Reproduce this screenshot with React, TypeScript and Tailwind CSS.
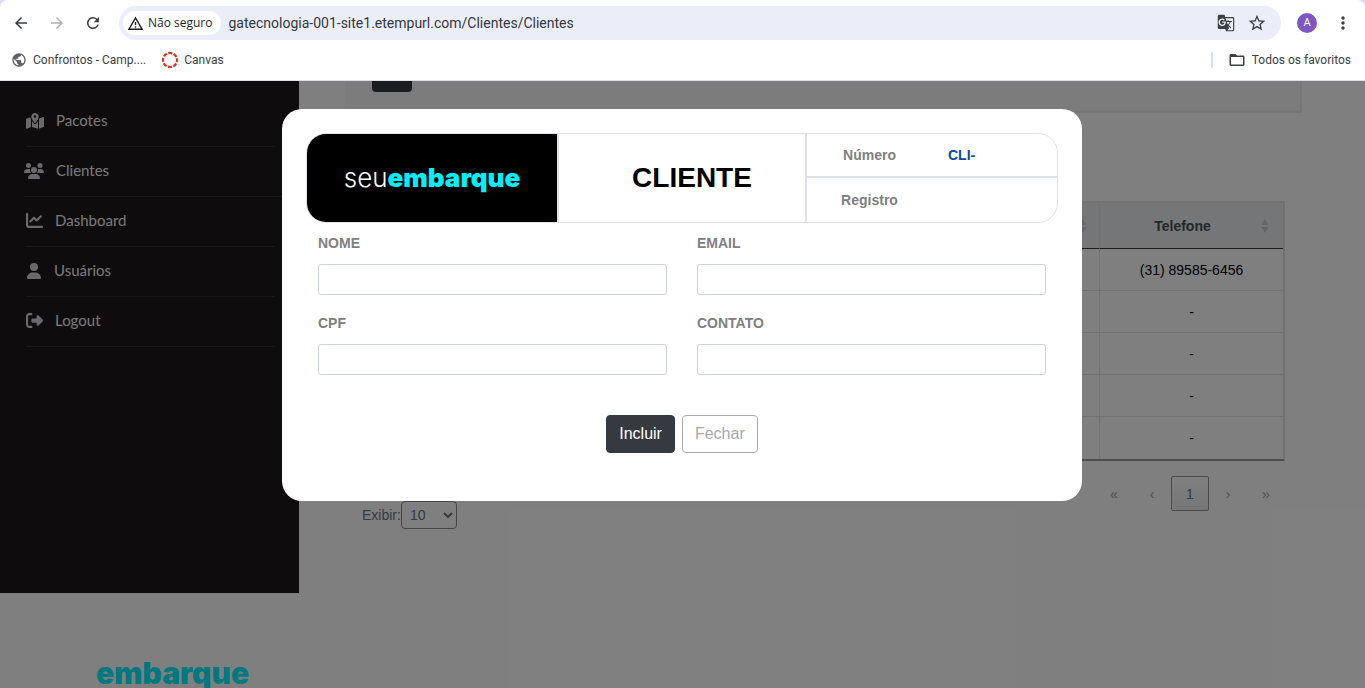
import React from "react";
import {
  MdArrowBack,
  MdArrowForward,
  MdFolderOpen,
  MdGTranslate,
  MdMoreVert,
  MdOutlineWarningAmber,
  MdPublic,
  MdRefresh,
  MdStarBorder,
} from "react-icons/md";
import {
  FaChartLine,
  FaMapLocationDot,
  FaRightFromBracket,
  FaUser,
  FaUsers,
} from "react-icons/fa6";

function CanvasMark() {
  return (
    <svg className="h-4 w-4" viewBox="0 0 16 16" fill="none">
      <circle cx="8" cy="8" r="7" stroke="#d3362b" strokeWidth="2.2" strokeDasharray="4.1 1.4" strokeDashoffset="2" />
    </svg>
  );
}

function BrowserBar() {
  return (
    <header className="shrink-0 bg-[#d3e3fd] font-['Roboto',sans-serif] text-[#3c4043]">
      <div className="rounded-t-lg border-b border-[#dde1e6] bg-white">
        <div className="flex h-[46px] items-center pl-3 pr-3">
          <button className="flex h-[18px] w-[18px] items-center justify-center text-[#3c4043]">
            <MdArrowBack size={18} />
          </button>
          <button className="ml-[18px] flex h-[18px] w-[18px] items-center justify-center text-[#aeb0b3]">
            <MdArrowForward size={18} />
          </button>
          <button className="ml-[18px] flex h-[18px] w-[18px] items-center justify-center text-[#3c4043]">
            <MdRefresh size={18} />
          </button>
          <div className="ml-[17px] flex h-[34px] flex-1 items-center rounded-full bg-[#ebeef8] pl-1 pr-[14px]">
            <button className="flex h-6 items-center gap-1 rounded-full bg-white pl-1 pr-2 font-['Open_Sans',sans-serif] text-xs text-[#1f1f1f]">
              <MdOutlineWarningAmber size={17} />
              Não seguro
            </button>
            <input
              type="text"
              defaultValue="gatecnologia-001-site1.etempurl.com/Clientes/Clientes"
              className="ml-2 min-w-0 flex-1 bg-transparent text-sm text-[#34373c] outline-none"
            />
            <button className="ml-3">
              <MdGTranslate size={18} />
            </button>
            <button className="ml-3">
              <MdStarBorder size={20} />
            </button>
          </div>
          <div className="ml-4 flex h-5 w-5 items-center justify-center rounded-full bg-[#7e57c2] text-[11px] text-white">
            A
          </div>
          <button className="ml-4">
            <MdMoreVert size={20} />
          </button>
        </div>
        <div className="flex h-[34px] items-center pb-[6px] pl-[11px] pr-[14px] text-xs">
          <a href="#" className="flex items-center gap-[6px]">
            <MdPublic size={16} className="text-[#5f6368]" />
            Confrontos - Camp....
          </a>
          <a href="#" className="ml-4 flex items-center gap-[6px]">
            <CanvasMark />
            Canvas
          </a>
          <div className="ml-auto h-4 w-[2px] bg-[#d3e3fd]" />
          <button className="ml-[15px] flex items-center gap-[6px]">
            <MdFolderOpen size={18} />
            Todos os favoritos
          </button>
        </div>
      </div>
    </header>
  );
}

const menu = [
  { label: "Pacotes", icon: <FaMapLocationDot size={18} />, wide: false },
  { label: "Clientes", icon: <FaUsers size={20} />, wide: true },
  { label: "Dashboard", icon: <FaChartLine size={17} />, wide: false },
  { label: "Usuários", icon: <FaUser size={16} />, wide: false },
  { label: "Logout", icon: <FaRightFromBracket size={17} />, wide: false },
];

function Sidebar() {
  return (
    <aside className="w-[299px] shrink-0">
      <nav className="flex h-[512px] flex-col bg-[#1e191b] pt-4 font-['Lato',sans-serif] text-[15px] text-[#f0f0f0]">
        {menu.map((item) => (
          <a
            key={item.label}
            href="#"
            className={`flex h-[50px] items-center gap-3 border-b border-[#363133] pb-[2px] ${item.wide ? "ml-6 mr-4" : "ml-[26px] mr-6"}`}
          >
            <span className="text-[#d6d3dc]">{item.icon}</span>
            {item.label}
          </a>
        ))}
      </nav>
      <div className="pl-24 pt-16 font-['Inter',sans-serif] text-3xl leading-8 font-black text-[#00f0ff]">
        embarque
      </div>
    </aside>
  );
}

function SortMark() {
  return (
    <svg className="h-4 w-[8px] shrink-0 text-[#c9ccd0]" viewBox="0 0 8 16" fill="currentColor">
      <path d="M4 1 7.5 7h-7zM4 15 .5 9h7z" />
    </svg>
  );
}

const phones = ["(31) 89585-6456", "-", "-", "-", "-"];

function ClientList() {
  return (
    <main className="min-w-0 flex-1 pl-[46px] pr-[63px]">
      <div className="h-8 border-b-2 border-r-2 border-[#eeeef3] bg-[#f8f8fb] pl-[27px]">
        <div className="h-[11px] w-10 rounded-b bg-[#343a40]" />
      </div>
      <div className="px-[17px] pt-[88px]">
        <table className="w-full table-fixed border-separate border-spacing-0 border-2 border-b-[#9a9da0] border-l-[#dee2e6] border-r-[#dee2e6] border-t-[#dee2e6] text-sm text-black">
          <thead>
            <tr className="h-[46px] bg-[#e9ecef] text-[#495057]">
              <th className="border-b border-r border-b-[#343a40] border-r-[#dee2e6] pr-3">
                <span className="flex justify-end">
                  <SortMark />
                </span>
              </th>
              <th className="w-[183px] border-b border-b-[#343a40] pr-[14px] pl-1">
                <span className="flex items-center">
                  <span className="flex-1 text-center">Telefone</span>
                  <SortMark />
                </span>
              </th>
            </tr>
          </thead>
          <tbody>
            {phones.map((phone, i) => (
              <tr key={i} className="h-[42px]">
                <td className={`border-r border-[#dee2e6] ${i < 4 ? "border-b" : ""}`} />
                <td className={`border-[#dee2e6] text-center ${i < 4 ? "border-b" : ""}`}>{phone}</td>
              </tr>
            ))}
          </tbody>
        </table>
        <div className="flex items-start justify-between pt-[15px] text-sm text-[#6c757d]">
          <div className="flex items-center pt-[25px]">
            <label htmlFor="exibir">Exibir:</label>
            <select
              id="exibir"
              className="h-7 w-14 rounded border border-[#8b8f93] bg-white pl-1"
              defaultValue="10"
            >
              <option>10</option>
            </select>
          </div>
          <div className="flex">
            <button className="h-[35px] w-[38px] text-[#a0a0a0]">«</button>
            <button className="h-[35px] w-[38px] text-[#a0a0a0]">‹</button>
            <button className="h-[35px] w-[38px] rounded-xs border border-[#979797] bg-linear-to-b from-white to-[#eeeeee]">
              1
            </button>
            <button className="h-[35px] w-[38px] text-[#a0a0a0]">›</button>
            <button className="h-[35px] w-[38px] text-[#a0a0a0]">»</button>
          </div>
        </div>
      </div>
    </main>
  );
}

const fields = [
  { id: "nome", label: "NOME" },
  { id: "email", label: "EMAIL" },
  { id: "cpf", label: "CPF" },
  { id: "contato", label: "CONTATO" },
];

function ClientDialog() {
  return (
    <form
      role="dialog"
      className="w-full max-w-[800px] rounded-[20px] bg-white px-6 pb-12 pt-6 text-[#808080]"
      onSubmit={(e) => e.preventDefault()}
    >
      <div className="grid h-[90px] grid-cols-3 overflow-hidden rounded-[20px] border border-[#dee2e6] text-sm font-bold">
        <div className="flex items-center justify-center bg-black font-['Inter',sans-serif] text-[26px] text-white">
          <span className="font-light">seu</span>
          <span className="font-black text-[#00f0ff]">embarque</span>
        </div>
        <h1 className="flex items-center justify-center border-x-2 border-[#dee2e6] pl-5 text-[28px] text-black">
          CLIENTE
        </h1>
        <div className="grid grid-rows-2 divide-y-2 divide-[#dee2e6]">
          <div className="grid grid-cols-2 items-center">
            <span className="text-center">Número</span>
            <span className="pl-4 text-[#0d47a1]">CLI-</span>
          </div>
          <div className="grid grid-cols-2 items-center">
            <span className="text-center">Registro</span>
          </div>
        </div>
      </div>
      <div className="grid grid-cols-2 gap-x-[30px] gap-y-[18px] px-3 pt-[10px]">
        {fields.map((field) => (
          <div key={field.id} className="flex flex-col gap-[10px]">
            <label htmlFor={field.id} className="text-sm leading-[21px] font-bold">
              {field.label}
            </label>
            <input
              id={field.id}
              type="text"
              className="h-[31px] w-full rounded-[3px] border border-[#ced4da] bg-white px-2 text-sm text-[#495057]"
            />
          </div>
        ))}
      </div>
      <div className="flex justify-center gap-[7px] pt-10 text-base">
        <button type="submit" className="h-[38px] rounded border border-[#343a40] bg-[#343a40] px-3 text-white">
          Incluir
        </button>
        <button type="button" className="h-[38px] rounded border border-[#a9a9a9] px-3 text-[#a9a9a9]">
          Fechar
        </button>
      </div>
    </form>
  );
}

export default function App() {
  return (
    <div className="flex h-screen flex-col overflow-hidden bg-white font-['Liberation_Sans',Arial,sans-serif]">
      <BrowserBar />
      <div className="relative min-h-0 flex-1 overflow-hidden">
        <div className="flex">
          <Sidebar />
          <ClientList />
        </div>
        <div className="absolute inset-0 flex items-start justify-center bg-black/50 pt-7 pr-px">
          <ClientDialog />
        </div>
      </div>
    </div>
  );
}
